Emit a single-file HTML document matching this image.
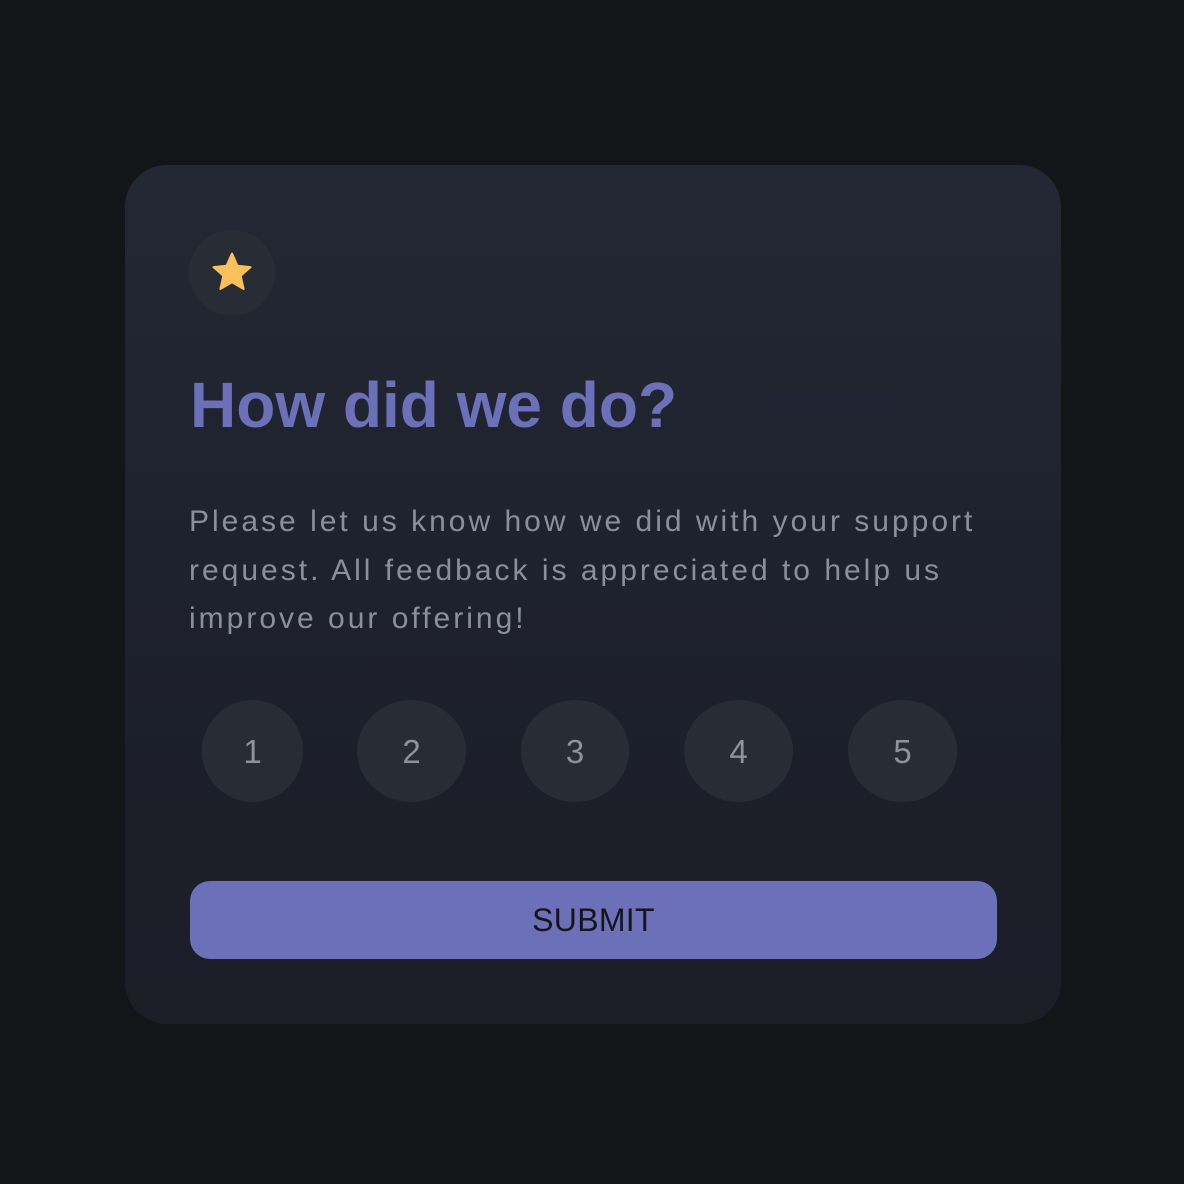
<!DOCTYPE html>
<html><head><meta charset="utf-8"><style>
html,body{margin:0;padding:0;width:1184px;height:1184px;background:#141518;overflow:hidden;font-family:"Liberation Sans",sans-serif}
.card{position:absolute;left:125px;top:165px;width:936px;height:859px;border-radius:42px;background:linear-gradient(180deg,#232834 0%,#1c1f29 70%,#1b1e27 100%)}
.star{position:absolute;left:64px;top:65px;width:86px;height:86px;border-radius:50%;background:#272c35}
.star svg{position:absolute;left:21px;top:21px}
h1{position:absolute;left:65px;top:208px;margin:0;font-size:64px;font-weight:bold;color:#6c70b8;line-height:1;white-space:nowrap;letter-spacing:0}
.p{position:absolute;left:64px;top:333px;font-size:30px;color:#8a8f99;line-height:48.5px;letter-spacing:3px;white-space:nowrap}
.n{position:absolute;top:535px;height:102px;border-radius:50%;background:#272c35;color:#8d929c;font-size:33px;display:flex;align-items:center;justify-content:center;padding-top:2px;box-sizing:border-box}
.btn{position:absolute;left:65px;top:716px;width:807px;height:78px;border-radius:20px;background:#6c70b8;color:#141518;font-size:32px;display:flex;align-items:center;justify-content:center;letter-spacing:0.3px}
</style></head><body>
<div class="card">
  <div class="star"><svg width="44" height="44" viewBox="0 0 44 44"><path d="M22 2.5 L27.5 14.8 L40.5 16.1 L30.7 24.8 L33.6 38 L22 31.2 L10.4 38 L13.3 24.8 L3.5 16.1 L16.5 14.8 Z" fill="#fbbf5c" stroke="#fbbf5c" stroke-width="2" stroke-linejoin="round"/></svg></div>
  <h1>How did we do?</h1>
  <div class="p">Please let us know how we did with your support<br>request. All feedback is appreciated to help us<br>improve our offering!</div>
  <div class="n" style="left:77px;width:101px">1</div>
  <div class="n" style="left:232px;width:109px">2</div>
  <div class="n" style="left:396px;width:108px">3</div>
  <div class="n" style="left:559px;width:109px">4</div>
  <div class="n" style="left:723px;width:109px">5</div>
  <div class="btn">SUBMIT</div>
</div>
</body></html>
